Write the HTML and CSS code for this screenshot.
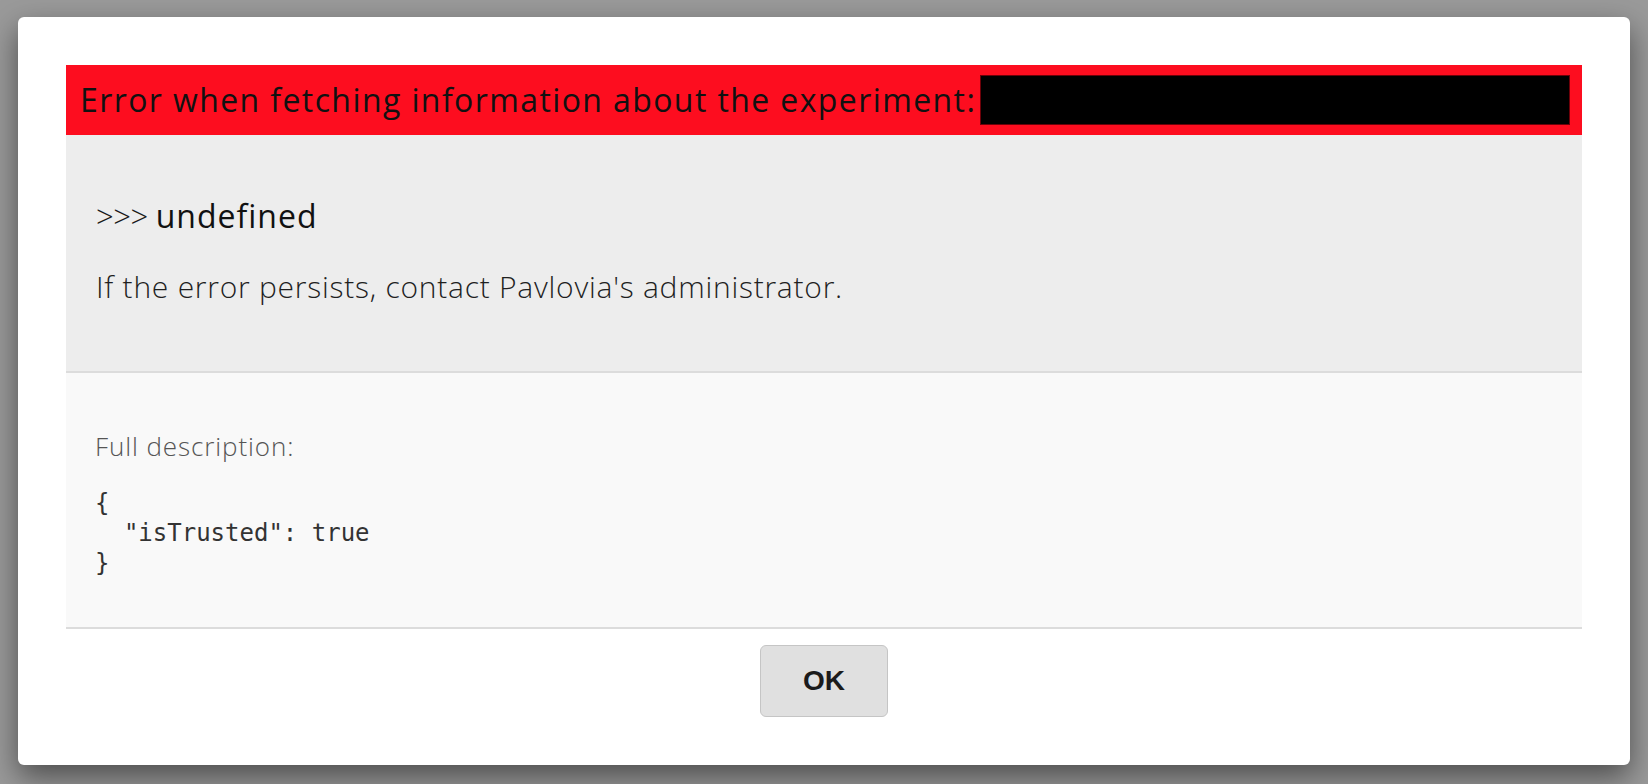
FILE: index.html
```html
<!DOCTYPE html>
<html lang="en">
<head>
<meta charset="utf-8">
<title>Error</title>
<link rel="stylesheet" href="styles.css">
</head>
<body>
<div class="overlay">
  <div class="dialog">
    <div class="dialog-body">
      <div class="error-title">
        <span class="title-text">Error when fetching information about the experiment:</span>
        <span class="redacted"></span>
      </div>
      <div class="error-main">
        <p class="stack"><span class="prompt">&gt;&gt;&gt;</span> <span class="msg">undefined</span></p>
        <p class="hint">If the error persists, contact Pavlovia's administrator.</p>
      </div>
      <div class="error-details">
        <p class="details-label">Full description:</p>
        <pre class="details-code">{
  "isTrusted": true
}</pre>
      </div>
    </div>
    <div class="button-pane">
      <button class="ok-btn" type="button">OK</button>
    </div>
  </div>
</div>
</body>
</html>
```
FILE: styles.css
```css
html, body {
  margin: 0;
  height: 100%;
}

body {
  background: #9a9a9a;
  font-family: "Open Sans", "Liberation Sans", sans-serif;
  color: #111;
}

.overlay {
  box-sizing: border-box;
  height: 100%;
  padding: 17px 18px 19px;
  display: flex;
}

.dialog {
  flex: 1;
  display: flex;
  flex-direction: column;
  background: #fff;
  border-radius: 6px;
  box-shadow: 0 12px 30px rgba(0, 0, 0, 0.5);
  padding: 48px 48px 48px;
}

.dialog-body {
  display: flex;
  flex-direction: column;
}

.error-title {
  height: 70px;
  display: flex;
  align-items: center;
  background: #fd0d1f;
  padding: 0 12px 0 14px;
}

.title-text {
  font-size: 32px;
  line-height: 1;
  letter-spacing: 1.4px;
  color: #111;
  white-space: nowrap;
}

.redacted {
  flex: 1;
  height: 50px;
  margin-left: 4px;
  box-sizing: border-box;
  background: #000;
  border: 1px solid #6d0008;
}

.error-main {
  background: #ededed;
  padding: 61px 30px 64px;
  border-bottom: 2px solid #dcdcdc;
}

.stack {
  margin: 0;
  font-size: 31px;
  line-height: 40px;
  color: #111;
}

.prompt {
  font-weight: 300;
  letter-spacing: -0.5px;
  color: #1a1a1a;
}

.msg {
  font-size: 32px;
  font-weight: 400;
  letter-spacing: 1px;
}

.hint {
  margin: 31px 0 0;
  font-size: 30px;
  line-height: 40px;
  font-weight: 300;
  letter-spacing: 0.75px;
  color: #1f1f1f;
}

.error-details {
  background: #f9f9f9;
  padding: 57px 29px 49px;
  border-bottom: 2px solid #dcdcdc;
}

.details-label {
  margin: 0;
  font-size: 26px;
  line-height: 32px;
  font-weight: 300;
  letter-spacing: 0.9px;
  color: #555;
}

.details-code {
  margin: 26px 0 0;
  font-family: "DejaVu Sans Mono", "Liberation Mono", monospace;
  font-size: 24px;
  line-height: 30px;
  color: #333;
}

.button-pane {
  display: flex;
  justify-content: center;
  padding-top: 16px;
}

.ok-btn {
  width: 128px;
  height: 72px;
  box-sizing: border-box;
  background: #e0e0e0;
  border: 1px solid #c5c5c5;
  border-radius: 6px;
  font-family: "Liberation Sans", Arial, sans-serif;
  font-weight: 700;
  font-size: 28px;
  color: #1b1b1b;
  padding: 0;
}
```
